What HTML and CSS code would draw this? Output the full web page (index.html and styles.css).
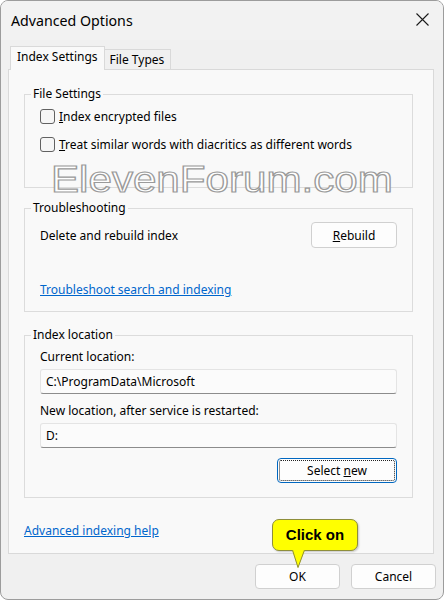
FILE: index.html
```html
<!DOCTYPE html>
<html>
  <head>
    <meta charset="utf-8">
    <link rel="stylesheet" href="styles.css">
    <title>Advanced Options</title>
  </head>
  <body>
    <div class="dialog">
      <div class="titlebar">
        <span class="title">Advanced Options</span>
        <svg class="close" width="13" height="13" viewBox="0 0 13 13">
          <path d="M0.5 0.5 L12.5 12.5 M12.5 0.5 L0.5 12.5" stroke="#1a1a1a" stroke-width="1.1" fill="none"/>
        </svg>
      </div>

      <div class="tabs">
        <div class="tab active">Index Settings</div>
        <div class="tab">File Types</div>
      </div>

      <div class="panel">
        <fieldset class="group group-files">
          <legend>File Settings</legend>
          <label class="check"><span class="box"></span><span><u>I</u>ndex encrypted files</span></label>
          <label class="check second"><span class="box"></span><span><u>T</u>reat similar words with diacritics as different words</span></label>
        </fieldset>

        <fieldset class="group group-trouble">
          <legend>Troubleshooting</legend>
          <div class="row">
            <span>Delete and rebuild index</span>
            <button class="btn rebuild"><u>R</u>ebuild</button>
          </div>
          <a class="link trouble-link" href="#">Troubleshoot search and indexing</a>
        </fieldset>

        <fieldset class="group group-location">
          <legend>Index location</legend>
          <div class="field-label">Current location:</div>
          <div class="textbox">C:\ProgramData\Microsoft</div>
          <div class="field-label next">New location, after service is restarted:</div>
          <div class="textbox">D:</div>
          <div class="row end">
            <button class="btn select-new"><span>Select <u>n</u>ew</span></button>
          </div>
        </fieldset>

        <a class="link help-link" href="#">Advanced indexing help</a>
      </div>

      <div class="footer">
        <button class="btn">OK</button>
        <button class="btn">Cancel</button>
      </div>

      <div class="watermark">ElevenForum.com</div>

      <div class="callout">
        Click on
        <svg class="tail" width="14" height="19" viewBox="0 0 14 19">
          <polygon points="0,0 6,18 13,0" fill="#ffff00"/>
          <polyline points="0.5,0 6,17.5 12.5,0" fill="none" stroke="#8e8e3a" stroke-width="1"/>
        </svg>
      </div>
    </div>
  </body>
</html>
```

FILE: styles.css
```css
body {
  margin: 0;
  background: #ffffff;
  font-family: "Noto Sans", "Open Sans", sans-serif;
  font-size: 12px;
  color: #000;
}

.dialog {
  position: relative;
  width: 444px;
  height: 600px;
  box-sizing: border-box;
  border: 1px solid #9c9c9c;
  border-radius: 8px;
  background: #f0f0f0;
  display: flex;
  flex-direction: column;
  overflow: hidden;
}

/* title bar */
.titlebar {
  height: 39px;
  display: flex;
  justify-content: space-between;
  align-items: flex-start;
  background: #f2f2f2;
}
.title {
  font-size: 14.2px;
  line-height: 39px;
  padding-left: 10px;
}
.close {
  margin-top: 12px;
  margin-right: 14px;
}

/* tabs */
.tabs {
  margin-top: 6px;
  margin-left: 9px;
  display: flex;
  align-items: flex-end;
}
.tab {
  box-sizing: border-box;
  height: 20px;
  line-height: 19px;
  padding: 0 6px 0 5px;
  border: 1px solid #d9d9d9;
  border-bottom: none;
  border-left: none;
  background: #f0f0f0;
}
.tab.active {
  position: relative;
  z-index: 1;
  height: 24px;
  line-height: 20px;
  padding: 0 6px;
  margin-bottom: -1px;
  border-left: 1px solid #d9d9d9;
  background: #f9f9f9;
}

/* tab page */
.panel {
  margin: 0 9px 0 7px;
  padding: 16px 20px 14px 15px;
  border: 1px solid #d9d9d9;
  background: #f9f9f9;
}

.group {
  margin: 0;
  min-width: 0;
  border: 1px solid #dcdcdc;
}
.group legend {
  margin-left: -9px;
  padding: 0 2px;
  line-height: 16px;
}
.group-files {
  padding: 4px 15px 33px;
}
.group-trouble {
  margin-top: 12px;
  padding: 6px 15px 13px;
}
.group-location {
  margin-top: 15px;
  padding: 6px 15px 14px;
}

.check {
  display: flex;
  align-items: center;
  gap: 4px;
  height: 20px;
}
.check.second {
  margin-top: 8px;
}
.box {
  width: 15px;
  height: 15px;
  box-sizing: border-box;
  border: 1px solid #616161;
  border-radius: 3px;
  background: #f6f6f6;
}

.row {
  display: flex;
  justify-content: space-between;
  align-items: center;
}
.row.end {
  justify-content: flex-end;
  margin-top: 10px;
}

.btn {
  box-sizing: border-box;
  height: 25px;
  width: 85px;
  padding: 0;
  font-family: inherit;
  font-size: 12px;
  color: #000;
  background: #fdfdfd;
  border: 1px solid #d0d0d0;
  border-radius: 4px;
}
.rebuild {
  width: 86px;
  height: 26px;
}
.select-new {
  width: 120px;
  border: 1px solid #0067c0;
  outline: 1px dotted #222;
  outline-offset: -3px;
}

.link {
  display: block;
  width: max-content;
  line-height: 16px;
  color: #0066cc;
  text-decoration: underline;
}
.trouble-link {
  margin-top: 34px;
}
.help-link {
  margin-top: 25px;
}

.field-label {
  line-height: 16px;
}
.field-label.next {
  margin-top: 9px;
}
.textbox {
  margin-top: 4px;
  height: 25px;
  box-sizing: border-box;
  padding-left: 5px;
  line-height: 23px;
  background: #fbfbfb;
  border: 1px solid #e4e4e4;
  border-bottom-color: #8c8c8c;
  border-radius: 3px;
}

/* bottom buttons */
.footer {
  flex: 1;
  display: flex;
  justify-content: flex-end;
  align-items: flex-start;
  gap: 11px;
  padding: 10px 7px 0 0;
}

/* site stamp laid over the page */
.watermark {
  position: absolute;
  left: 50px;
  top: 165px;
  font-family: "Liberation Sans", Arial, sans-serif;
  font-size: 36px;
  line-height: 28px;
  color: #ffffff;
  -webkit-text-stroke: 1.2px #9a9a9a;
  transform-origin: left top;
  transform: scaleX(1.17);
  white-space: nowrap;
}

/* yellow pointer note */
.callout {
  position: absolute;
  left: 271px;
  top: 518px;
  width: 86px;
  height: 32px;
  box-sizing: border-box;
  border: 1px solid #8e8e3a;
  border-radius: 7px;
  background: #ffff00;
  box-shadow: 1px 1px 2px rgba(0, 0, 0, 0.2);
  font-family: "Liberation Sans", Arial, sans-serif;
  font-weight: bold;
  font-size: 15px;
  line-height: 30px;
  text-align: center;
}
.tail {
  position: absolute;
  left: 19px;
  top: 30px;
}
```
